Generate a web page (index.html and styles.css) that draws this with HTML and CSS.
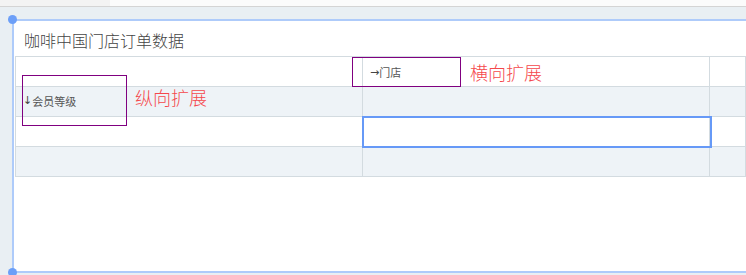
FILE: index.html
```html
<!DOCTYPE html>
<html lang="zh-CN">
<head>
  <meta charset="UTF-8" />
  <title>咖啡中国门店订单数据</title>
  <link rel="stylesheet" href="styles.css">
</head>
<body>
  <div class="topbar"><div class="topbar-left"></div></div>

  <div class="canvas">
    <div class="frame">
      <span class="handle handle-top"></span>
      <span class="handle handle-bottom"></span>

      <div class="title">咖啡中国门店订单数据</div>

      <div class="sheet">
        <div class="grid">
          <div class="cell"></div><div class="cell"></div><div class="cell"></div>
          <div class="cell alt"></div><div class="cell alt"></div><div class="cell alt"></div>
          <div class="cell"></div><div class="cell"></div><div class="cell"></div>
          <div class="cell alt"></div><div class="cell alt"></div><div class="cell alt"></div>
        </div>

        <div class="field field-row"><span class="arrow">↓</span>会员等级</div>
        <div class="hint hint-row">纵向扩展</div>
        <div class="field field-col"><span class="arrow">→</span>门店</div>
        <div class="hint hint-col">横向扩展</div>
        <div class="selected"></div>
      </div>
    </div>
  </div>
</body>
</html>
```

FILE: styles.css
```css
:root {
  --canvas-bg: #e9eff3;
  --frame: #aecbfa;
  --handle: #6c9ff8;
  --line: #d3dbe0;
  --row-alt: #eef3f7;
  --purple: #800080;
  --red: #f5474b;
  --select: #6699f7;
}

html, body {
  height: 100%;
}

body {
  margin: 0;
  overflow: hidden;
  background-color: var(--canvas-bg);
  font-family: "Noto Sans CJK SC", "Noto Sans", sans-serif;
}

.topbar {
  height: 6px;
  background-color: #fbfbfb;
  border-bottom: 1px solid #d4d4d4;
}

.topbar-left {
  width: 110px;
  height: 100%;
  background-color: #f3f3f3;
}

.canvas {
  padding: 12px 0 0 12px;
}

.frame {
  position: relative;
  height: 250px;
  background-color: #ffffff;
  border-top: 2px solid var(--frame);
  border-left: 2px solid var(--frame);
  border-bottom: 2px solid var(--frame);
}

.handle {
  position: absolute;
  left: -6px;
  width: 9px;
  height: 9px;
  border-radius: 50%;
  background-color: var(--handle);
}

.handle-top {
  top: -6px;
}

.handle-bottom {
  bottom: -6px;
}

.title {
  padding: 3px 0 0 10px;
  height: 32px;
  line-height: 32px;
  font-size: 16px;
  font-weight: 300;
  color: #444;
}

.sheet {
  position: relative;
  margin-left: 1px;
}

.grid {
  display: grid;
  grid-template-columns: 347px 347px 1fr;
  grid-auto-rows: 30px;
  border-top: 1px solid var(--line);
  border-left: 1px solid var(--line);
}

.cell {
  border-right: 1px solid var(--line);
  border-bottom: 1px solid var(--line);
}

.cell.alt {
  background-color: var(--row-alt);
}

.field {
  position: absolute;
  box-sizing: border-box;
  display: flex;
  align-items: center;
  border: 1px solid var(--purple);
  font-size: 11px;
  color: #555;
}

.arrow {
  font-family: "DejaVu Sans", sans-serif;
  font-size: 11px;
  color: #444;
}

.field-row {
  left: 7px;
  top: 19px;
  width: 105px;
  height: 51px;
  padding-left: 0;
}

.field-col {
  left: 337px;
  top: 1px;
  width: 109px;
  height: 30px;
  padding-left: 17px;
}

.hint {
  position: absolute;
  font-size: 18px;
  font-weight: 300;
  line-height: 24px;
  color: var(--red);
}

.hint-row {
  left: 120px;
  top: 29px;
}

.hint-col {
  left: 455px;
  top: 4px;
}

.selected {
  position: absolute;
  box-sizing: border-box;
  left: 347px;
  top: 60px;
  width: 350px;
  height: 32px;
  border: 2px solid var(--select);
}
```
